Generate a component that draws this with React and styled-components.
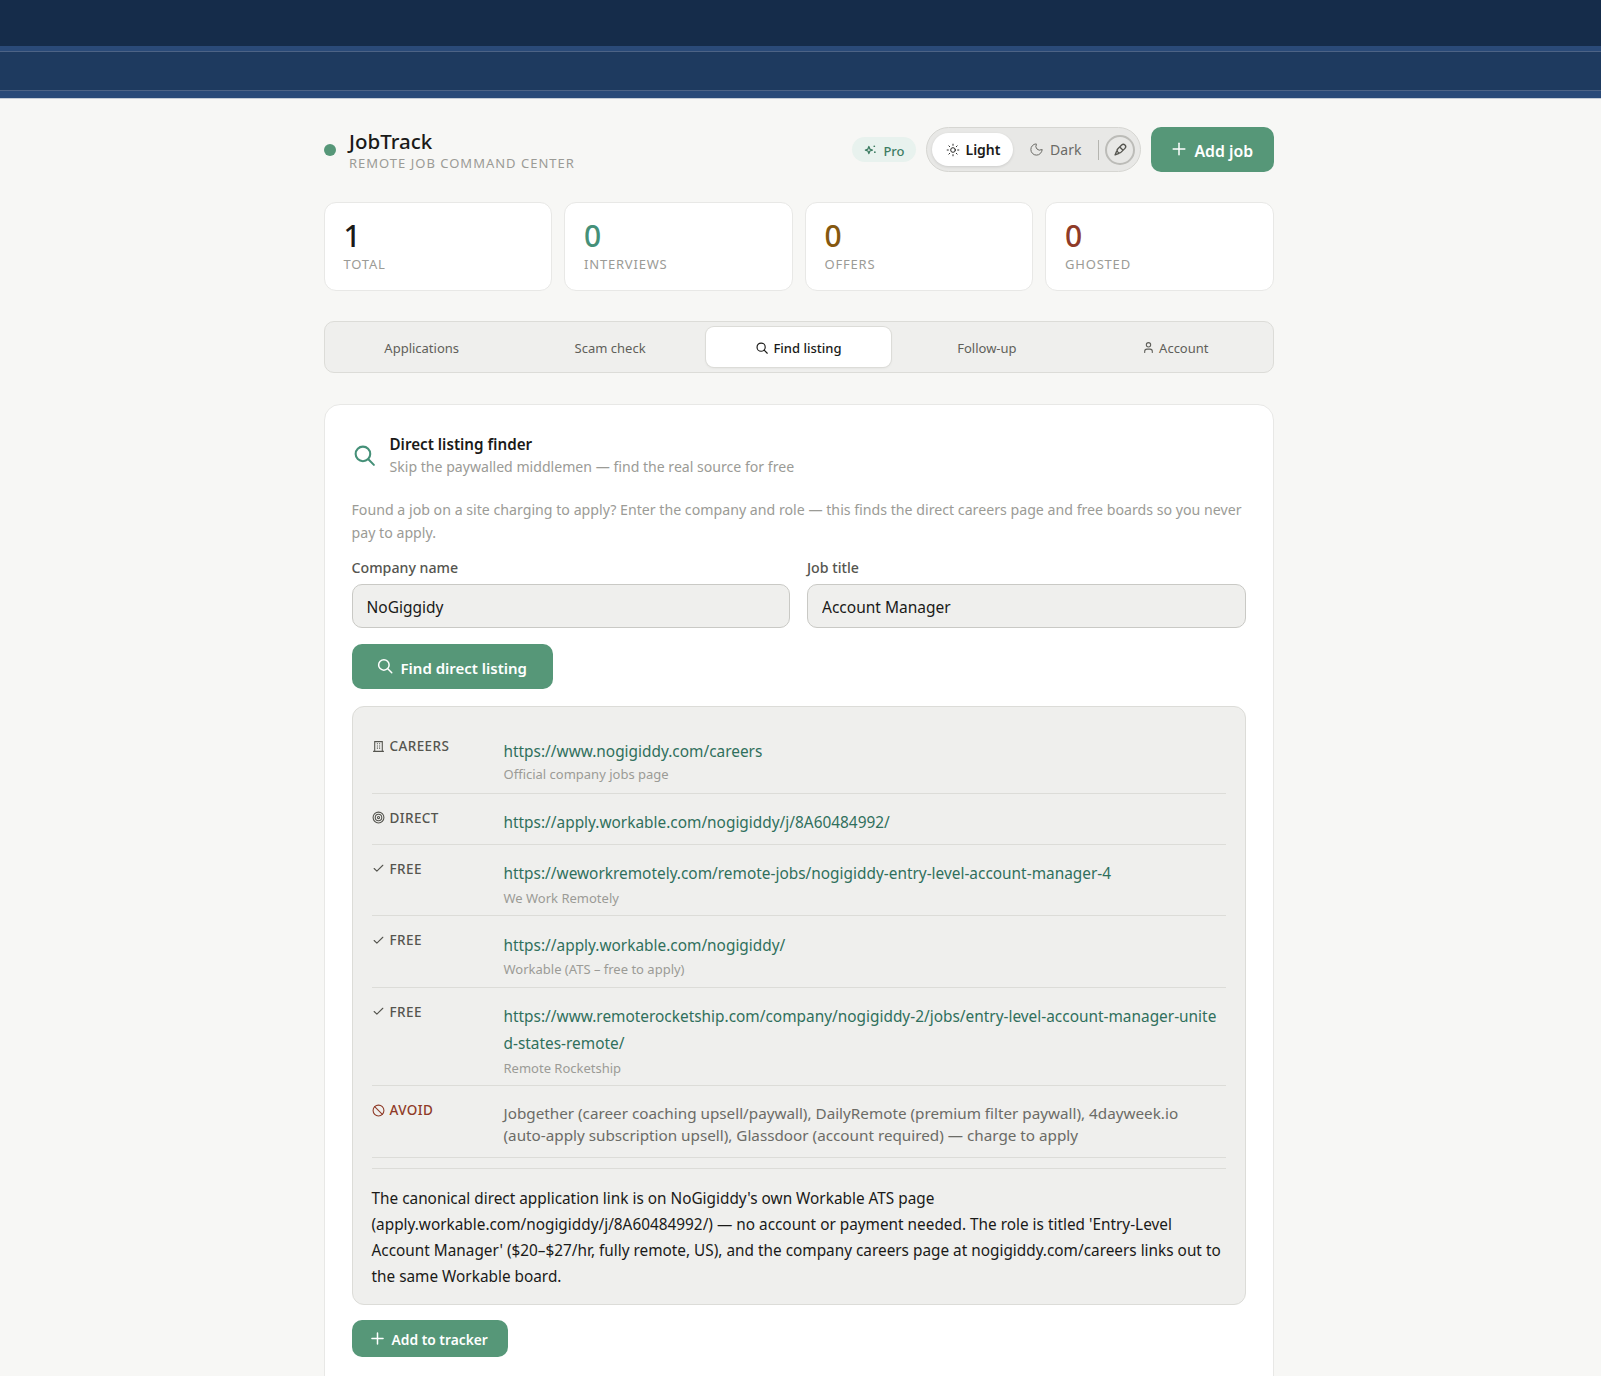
import styled, { createGlobalStyle } from "styled-components";
import { Plus, Sun, Moon, User, Target, Check, Ban } from "lucide-react";

const GlobalStyle = createGlobalStyle`
  html, body {
    margin: 0;
    padding: 0;
    background: #f7f7f5;
  }
  body {
    font-family: "Noto Sans", "Open Sans", sans-serif;
    color: #1a1a18;
  }
`;

const Page = styled.div`
  height: 1376px;
  overflow: hidden;
`;

const TopBar = styled.div`
  height: 46px;
  background: #152c4a;
`;

const SubBar = styled.div`
  height: 52px;
  box-sizing: border-box;
  background: #1e3a5f;
  border-top: 5px solid #2a4a78;
  border-bottom: 7px solid #2a4a78;
  box-shadow: inset 0 1px 0 #4d6385, inset 0 -1px 0 #4d6385, 0 1px 0 #c5ccd6;
`;

const Main = styled.div`
  width: 950px;
  margin-left: 323.5px;
  padding-top: 29px;
`;

const Header = styled.header`
  display: flex;
  align-items: center;
  justify-content: space-between;
  height: 45px;
  margin-bottom: 30px;
`;

const Brand = styled.div`
  display: flex;
  align-items: center;
  gap: 13.5px;
`;

const Dot = styled.span`
  width: 12px;
  height: 12px;
  border-radius: 50%;
  background: #569778;
`;

const BrandText = styled.div`
  margin-top: 2px;
`;

const BrandName = styled.div`
  font-size: 20.5px;
  font-weight: 500;
  line-height: 24px;
`;

const BrandSub = styled.div`
  margin-top: 1px;
  font-size: 13px;
  line-height: 18px;
  letter-spacing: 1px;
  color: #9b9b96;
`;

const HeaderRight = styled.div`
  display: flex;
  align-items: center;
`;

const ProBadge = styled.span`
  display: flex;
  align-items: center;
  gap: 6px;
  box-sizing: border-box;
  height: 25px;
  padding: 2px 11px 0 12px;
  margin-right: 10px;
  border-radius: 13px;
  background: #e8f2ee;
  color: #3e7d63;
  font-size: 13px;
  font-weight: 500;

  svg {
    margin-bottom: 3px;
  }
`;

const ThemeSwitch = styled.div`
  display: flex;
  align-items: center;
  box-sizing: border-box;
  width: 215px;
  height: 45px;
  padding: 0 5px;
  margin-right: 10px;
  border: 1px solid #d6d6d2;
  border-radius: 23px;
  background: #e8e8e6;
`;

const ThemeOption = styled.span`
  display: flex;
  align-items: center;
  gap: 6px;
  box-sizing: border-box;
  width: ${(p) => (p.$active ? "82px" : "85px")};
  height: 33px;
  padding-left: ${(p) => (p.$active ? "14px" : "16px")};
  border-radius: 17px;
  background: ${(p) => (p.$active ? "#fff" : "transparent")};
  box-shadow: ${(p) => (p.$active ? "0 1px 3px rgba(0,0,0,0.12)" : "none")};
  color: ${(p) => (p.$active ? "#1a1a18" : "#6b6b66")};
  font-size: 14px;
  font-weight: ${(p) => (p.$active ? 600 : 400)};
`;

const SwitchDivider = styled.span`
  width: 1px;
  height: 20px;
  margin-right: 6px;
  background: #b5b5b0;
`;

const PenButton = styled.span`
  display: flex;
  align-items: center;
  justify-content: center;
  box-sizing: border-box;
  width: 30px;
  height: 30px;
  border: 2px solid #bcbcb8;
  border-radius: 50%;
  color: #55554f;
`;

const PrimaryButton = styled.button`
  display: flex;
  align-items: center;
  gap: ${(p) => p.$gap || "6px"};
  box-sizing: border-box;
  width: ${(p) => p.$width};
  height: ${(p) => p.$height || "45px"};
  padding: 2px 0 0 ${(p) => p.$pad || "18px"};
  border: none;
  border-radius: 10px;
  background: #569778;
  color: #fff;
  font-family: inherit;
  font-size: ${(p) => p.$size || "15px"};
  font-weight: 600;

  svg {
    margin-bottom: 3px;
  }
`;

const Stats = styled.div`
  display: grid;
  grid-template-columns: repeat(4, 1fr);
  gap: 12px;
  margin-bottom: 30px;
`;

const StatCard = styled.div`
  box-sizing: border-box;
  height: 89px;
  padding: 15px 19px;
  background: #fff;
  border: 1px solid #e8e8e6;
  border-radius: 12px;
`;

const StatValue = styled.div`
  font-size: 30px;
  font-weight: 500;
  line-height: 36px;
  color: ${(p) => p.$color};
`;

const StatLabel = styled.div`
  margin-top: 1px;
  font-size: 13px;
  line-height: 18px;
  letter-spacing: 0.8px;
  color: #9b9b96;
`;

const Tabs = styled.nav`
  display: grid;
  grid-template-columns: repeat(5, 1fr);
  gap: 4px;
  box-sizing: border-box;
  height: 52px;
  padding: 5px;
  margin-bottom: 31px;
  background: #efefed;
  border: 1px solid #dcdcd8;
  border-radius: 10px;
`;

const Tab = styled.span`
  display: flex;
  align-items: center;
  justify-content: center;
  gap: 4px;
  padding-top: 1px;
  border-radius: 8px;
  font-size: 13px;
  font-weight: ${(p) => (p.$active ? 500 : 400)};
  color: ${(p) => (p.$active ? "#1a1a18" : "#5f5f5a")};
  background: ${(p) => (p.$active ? "#fff" : "transparent")};
  box-shadow: ${(p) => (p.$active ? "0 0 0 1px #dcdcd8, 0 1px 3px rgba(0,0,0,0.08)" : "none")};
`;

const Card = styled.section`
  box-sizing: border-box;
  height: 1000px;
  padding: 27px;
  background: #fff;
  border: 1px solid #e8e8e6;
  border-radius: 16px;
`;

const CardHead = styled.div`
  display: flex;
  align-items: center;
  gap: 13px;
  margin-bottom: 20px;
`;

const HeadIcon = styled.span`
  display: flex;
  color: #459078;
`;

const CardTitle = styled.div`
  font-size: 15.2px;
  font-weight: 600;
  line-height: 24px;
`;

const CardSub = styled.div`
  font-size: 14.1px;
  line-height: 22px;
  color: #9b9b96;
`;

const Intro = styled.p`
  margin: 0 0 14px;
  font-size: 14.18px;
  line-height: 23px;
  color: #9b9b96;
`;

const Fields = styled.div`
  display: grid;
  grid-template-columns: 1fr 1fr;
  gap: 17px;
  margin-bottom: 16px;
`;

const Label = styled.label`
  display: block;
  margin-bottom: 6px;
  font-size: 14.2px;
  font-weight: 500;
  line-height: 20px;
  color: #55554f;
`;

const Input = styled.input`
  display: block;
  box-sizing: border-box;
  width: 100%;
  height: 44px;
  padding: 2px 14px 0;
  background: #efefed;
  border: 1px solid #c9c9c5;
  border-radius: 10px;
  outline: none;
  font-family: inherit;
  font-size: 15.5px;
  color: #1a1a18;
`;

const Results = styled.div`
  box-sizing: border-box;
  margin: 17px 0 15px;
  padding: 15px 19px 15px;
  background: #efefed;
  border: 1px solid #dcdcd8;
  border-radius: 12px;
`;

const Row = styled.div`
  display: grid;
  grid-template-columns: 132px 1fr;
  padding: ${(p) => (p.$first ? "14px 0 9px" : "14px 0 7.5px")};
  border-bottom: 1px solid #dcdcd8;
`;

const RowLabel = styled.div`
  display: flex;
  align-items: center;
  gap: 5px;
  height: 20px;
  font-size: 13.5px;
  font-weight: 500;
  letter-spacing: 0.4px;
  color: ${(p) => p.$color || "#55554f"};
`;

const Link = styled.a`
  display: block;
  margin-top: ${(p) => (p.$first ? "5px" : "1.5px")};
  font-size: 15.4px;
  line-height: ${(p) => (p.$first ? "22px" : "27px")};
  color: #2f6f5c;
  word-break: break-all;
`;

const RowNote = styled.div`
  padding-top: 0.5px;
  font-size: 13px;
  line-height: 20px;
  color: #9b9b96;
`;

const AvoidText = styled.div`
  margin: 2px 0 3.5px;
  font-size: 15.25px;
  line-height: 22px;
  color: #6b6b66;
`;

const Summary = styled.p`
  margin: 10px 0 0;
  padding-top: 16px;
  border-top: 1px solid #dcdcd8;
  font-size: 15.35px;
  line-height: 26px;
  color: #1a1a18;
`;

const SearchIcon = ({ size }) => (
  <svg width={size} height={size} viewBox="0 0 24 24" fill="none" stroke="currentColor" strokeWidth="2" strokeLinecap="round">
    <circle cx="10.5" cy="10.5" r="7" />
    <path d="M15.7 15.7 21 21" />
  </svg>
);

const SparkIcon = () => (
  <svg width="13" height="13" viewBox="0 0 24 24" fill="none" stroke="currentColor" strokeWidth="2.4" strokeLinejoin="round">
    <path d="M9 6.5 10.8 11.2 15.5 13 10.8 14.8 9 19.5 7.2 14.8 2.5 13 7.2 11.2Z" />
    <circle cx="19" cy="6" r="1.6" fill="currentColor" stroke="none" />
    <circle cx="20" cy="17" r="1.6" fill="currentColor" stroke="none" />
  </svg>
);

const PenIcon = () => (
  <svg width="16" height="16" viewBox="0 0 24 24" fill="none" stroke="currentColor" strokeWidth="2" strokeLinejoin="round">
    <g transform="rotate(45 12 12)">
      <rect x="8.5" y="1.5" width="7" height="15" rx="3.5" />
      <path d="M8.5 9h7M9.5 16.5 12 22.5l2.5-6" />
    </g>
  </svg>
);

const BuildingIcon = ({ size }) => (
  <svg width={size} height={size} viewBox="0 0 24 24" fill="none" stroke="currentColor" strokeWidth="2">
    <path d="M5 21V3h14v18M2 21h20" />
    <path d="M9 7h2M13 7h2M9 11h2M13 11h2M9 15h2M13 15h2" />
  </svg>
);

const links = [
  { icon: BuildingIcon, label: "CAREERS", url: "https://www.nogigiddy.com/careers", note: "Official company jobs page", first: true },
  { icon: Target, label: "DIRECT", url: "https://apply.workable.com/nogigiddy/j/8A60484992/" },
  { icon: Check, label: "FREE", url: "https://weworkremotely.com/remote-jobs/nogigiddy-entry-level-account-manager-4", note: "We Work Remotely" },
  { icon: Check, label: "FREE", url: "https://apply.workable.com/nogigiddy/", note: "Workable (ATS – free to apply)" },
  { icon: Check, label: "FREE", url: "https://www.remoterocketship.com/company/nogigiddy-2/jobs/entry-level-account-manager-united-states-remote/", note: "Remote Rocketship" },
];

const App = () => {
  return (
    <Page>
      <GlobalStyle />
      <TopBar />
      <SubBar />
      <Main>
        <Header>
          <Brand>
            <Dot />
            <BrandText>
              <BrandName>JobTrack</BrandName>
              <BrandSub>REMOTE JOB COMMAND CENTER</BrandSub>
            </BrandText>
          </Brand>
          <HeaderRight>
            <ProBadge><SparkIcon />Pro</ProBadge>
            <ThemeSwitch>
              <ThemeOption $active><Sun size={14} strokeWidth={1.6} />Light</ThemeOption>
              <ThemeOption><Moon size={15} strokeWidth={1.6} />Dark</ThemeOption>
              <SwitchDivider />
              <PenButton><PenIcon /></PenButton>
            </ThemeSwitch>
            <PrimaryButton $width="123px" $size="15.8px"><Plus size={20} strokeWidth={1.8} />Add job</PrimaryButton>
          </HeaderRight>
        </Header>

        <Stats>
          <StatCard><StatValue $color="#1a1a18">1</StatValue><StatLabel>TOTAL</StatLabel></StatCard>
          <StatCard><StatValue $color="#459078">0</StatValue><StatLabel>INTERVIEWS</StatLabel></StatCard>
          <StatCard><StatValue $color="#85580f">0</StatValue><StatLabel>OFFERS</StatLabel></StatCard>
          <StatCard><StatValue $color="#8f3b28">0</StatValue><StatLabel>GHOSTED</StatLabel></StatCard>
        </Stats>

        <Tabs>
          <Tab>Applications</Tab>
          <Tab>Scam check</Tab>
          <Tab $active><SearchIcon size={14} />Find listing</Tab>
          <Tab>Follow-up</Tab>
          <Tab><User size={13} />Account</Tab>
        </Tabs>

        <Card>
          <CardHead>
            <HeadIcon><SearchIcon size={25} /></HeadIcon>
            <div>
              <CardTitle>Direct listing finder</CardTitle>
              <CardSub>Skip the paywalled middlemen — find the real source for free</CardSub>
            </div>
          </CardHead>
          <Intro>
            Found a job on a site charging to apply? Enter the company and role — this finds the direct careers page and free boards so you never pay to apply.
          </Intro>
          <Fields>
            <div>
              <Label>Company name</Label>
              <Input defaultValue="NoGiggidy" />
            </div>
            <div>
              <Label>Job title</Label>
              <Input defaultValue="Account Manager" />
            </div>
          </Fields>
          <PrimaryButton $width="201px" $pad="24px" $gap="7px"><SearchIcon size={18} />Find direct listing</PrimaryButton>
          <Results>
            {links.map((l) => (
              <Row key={l.url} $first={l.first}>
                <RowLabel><l.icon size={13} />{l.label}</RowLabel>
                <div>
                  <Link $first={l.first}>{l.url}</Link>
                  {l.note && <RowNote>{l.note}</RowNote>}
                </div>
              </Row>
            ))}
            <Row>
              <RowLabel $color="#8f3b28"><Ban size={13} />AVOID</RowLabel>
              <AvoidText>
                Jobgether (career coaching upsell/paywall), DailyRemote (premium filter paywall), 4dayweek.io<br />
                (auto-apply subscription upsell), Glassdoor (account required) — charge to apply
              </AvoidText>
            </Row>
            <Summary>
              The canonical direct application link is on NoGigiddy's own Workable ATS page (apply.workable.com/nogigiddy/j/8A60484992/) — no account or payment needed. The role is titled 'Entry-Level Account Manager' ($20–$27/hr, fully remote, US), and the company careers page at nogigiddy.com/careers links out to the same Workable board.
            </Summary>
          </Results>
          <PrimaryButton $width="156px" $height="37px" $pad="16px" $gap="5px" $size="13.8px"><Plus size={19} strokeWidth={1.9} />Add to tracker</PrimaryButton>
        </Card>
      </Main>
    </Page>
  );
};

export default App;
